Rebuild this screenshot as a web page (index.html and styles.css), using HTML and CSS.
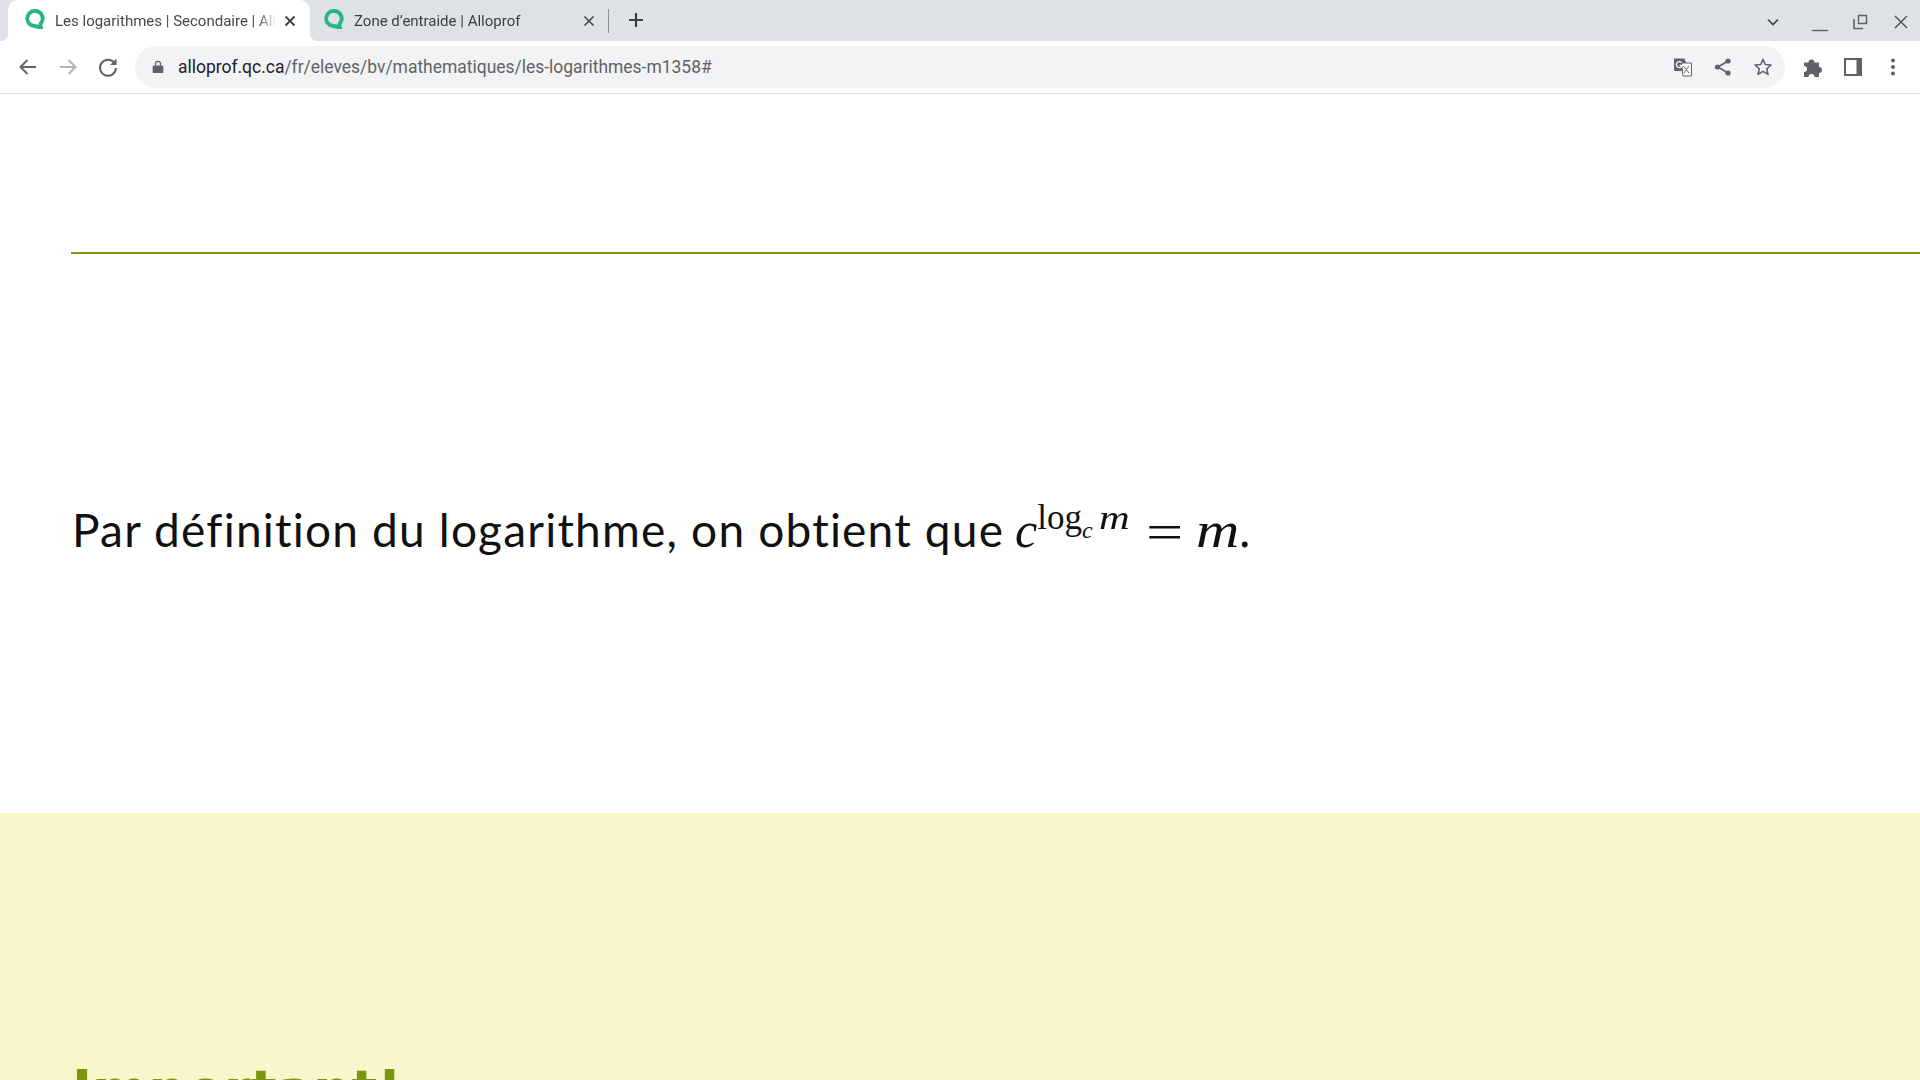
FILE: index.html
```html
<!DOCTYPE html>
<html lang="fr">
<head>
<meta charset="utf-8">
<title>Les logarithmes | Secondaire | Alloprof</title>
<link rel="stylesheet" href="styles.css">
</head>
<body>
<header class="chrome">
  <div class="tabstrip">
    <div class="tab tab-active">
      <svg class="favicon" viewBox="0 0 20 20"><path d="M10 2a7.500 7.500 0 0 0-.6 15c2.400.2 4.600.8 6.600 1.800-.5-1.500-.6-3-.3-4.300A7.500 7.500 0 0 0 10 2z" fill="none" stroke="#27b582" stroke-width="3.800"/></svg>
      <span class="tab-title">Les logarithmes | Secondaire | Alloprof</span>
      <svg class="tab-close" viewBox="0 0 12 12"><path d="M1.500 1.500l9 9M10.500 1.500l-9 9" stroke="#3c4043" stroke-width="1.800" fill="none"/></svg>
    </div>
    <div class="tab tab-idle">
      <svg class="favicon" viewBox="0 0 20 20"><path d="M10 2a7.500 7.500 0 0 0-.6 15c2.400.2 4.600.8 6.600 1.800-.5-1.500-.6-3-.3-4.300A7.500 7.500 0 0 0 10 2z" fill="none" stroke="#27b582" stroke-width="3.800"/></svg>
      <span class="tab-title">Zone d’entraide | Alloprof</span>
      <svg class="tab-close" viewBox="0 0 12 12"><path d="M1.500 1.500l9 9M10.500 1.500l-9 9" stroke="#45494d" stroke-width="1.600" fill="none"/></svg>
    </div>
    <span class="tab-sep"></span>
    <svg class="new-tab" viewBox="0 0 16 16"><path d="M8 1v14M1 8h14" stroke="#3c4043" stroke-width="2.200" fill="none"/></svg>
    <span class="strip-fill"></span>
    <svg class="win win-list" viewBox="0 0 14 14"><path d="M2 4.500l5 5 5-5" stroke="#3c4043" stroke-width="1.700" fill="none"/></svg>
    <svg class="win win-min" viewBox="0 0 16 16"><path d="M0 14.500h16" stroke="#5f6368" stroke-width="1.400" fill="none"/></svg>
    <svg class="win win-max" viewBox="0 0 16 16"><path d="M6.500 1.500h8v8h-8z" stroke="#5f6368" stroke-width="1.400" fill="none"/><path d="M2 5v9.500h9" stroke="#5f6368" stroke-width="1.600" fill="none"/></svg>
    <svg class="win win-close" viewBox="0 0 16 16"><path d="M2 2l12 12M14 2L2 14" stroke="#4a4d51" stroke-width="1.400" fill="none"/></svg>
  </div>
  <div class="toolbar">
    <svg class="tool" viewBox="0 0 24 24"><path d="M20 12H5M11.500 5l-7 7 7 7" stroke="#5f6368" stroke-width="2" fill="none"/></svg>
    <svg class="tool" viewBox="0 0 24 24"><path d="M4 12h15M12.500 5l7 7-7 7" stroke="#b1b4b8" stroke-width="2" fill="none"/></svg>
    <svg class="tool tool-reload" viewBox="0 0 24 24"><path d="M18.500 8A8 8 0 1 0 20 13" stroke="#5f6368" stroke-width="2" fill="none"/><path d="M20.500 3.500v6.500H14z" fill="#5f6368"/></svg>
    <div class="omnibox">
      <svg class="lock" viewBox="0 0 12 14"><path d="M1.500 5.500h9a.8.8 0 0 1 .8.800v6a.8.8 0 0 1-.8.800h-9a.8.8 0 0 1-.8-.8v-6a.8.8 0 0 1 .8-.8z" fill="#5f6368"/><path d="M3.500 5.500V3.800a2.500 2.500 0 0 1 5 0v1.700" stroke="#5f6368" stroke-width="1.300" fill="none"/></svg>
      <span class="url"><span class="url-host">alloprof.qc.ca</span>/fr/eleves/bv/mathematiques/les-logarithmes-m1358#</span>
      <svg class="omni-icon translate" viewBox="0 0 20 20"><path d="M1 1.500h10.500L13 6v8H2a1 1 0 0 1-1-1z" fill="#5f6368"/><path d="M8.500 6h10v13H10z" fill="#fff" stroke="#5f6368" stroke-width="1"/><path d="M10.500 9l5.500 7M16 9l-5 7" stroke="#5f6368" stroke-width="1" fill="none"/><path d="M8.500 5.500A3 3 0 1 0 9.200 8.500H6.500" stroke="#fff" stroke-width="1.300" fill="none"/></svg>
      <svg class="omni-icon" viewBox="0 0 20 20"><path d="M15 4L5 10l10 6" stroke="#5f6368" stroke-width="1.600" fill="none"/><circle cx="15" cy="4" r="2.600" fill="#5f6368"/><circle cx="4.500" cy="10" r="2.600" fill="#5f6368"/><circle cx="15" cy="16" r="2.600" fill="#5f6368"/></svg>
      <svg class="omni-icon" viewBox="0 0 20 20"><path d="M10 2.300l2.300 5.200 5.700.5-4.300 3.800 1.300 5.600-5-3-5 3 1.300-5.600L2 8l5.700-.5z" stroke="#5f6368" stroke-width="1.600" fill="none" stroke-linejoin="round"/></svg>
    </div>
    <svg class="ext" viewBox="0 0 20 20"><path d="M1 5.500h4.500a3 3 0 0 1 6 0H16v4.500a3 3 0 0 1 0 6V20h-4.500a3 3 0 0 0-6 0H1v-5a3 3 0 0 0 0-6z" fill="#5f6368"/></svg>
    <svg class="ext" viewBox="0 0 20 20"><path d="M1 1h18v18H1z" fill="#5f6368"/><path d="M3 3h10.500v14H3z" fill="#fff"/></svg>
    <svg class="menu" viewBox="0 0 6 20"><circle cx="3" cy="3.500" r="2" fill="#5f6368"/><circle cx="3" cy="10" r="2" fill="#5f6368"/><circle cx="3" cy="16.500" r="2" fill="#5f6368"/></svg>
  </div>
</header>
<main class="page">
  <section class="article">
    <hr class="rule">
    <p class="statement">Par définition du logarithme, on obtient que <span class="math"><i class="mi">c</i><span class="sup"><span class="op">log</span><i class="sub">c</i><i class="sup-m">m</i></span><span class="eq">=</span><i class="mi mi-wide">m</i><span class="dot">.</span></span></p>
  </section>
  <section class="notice">
    <h2 class="notice-title">Important!</h2>
  </section>
</main>
</body>
</html>
```
FILE: styles.css
```css
html, body { margin: 0; height: 100%; overflow: hidden; background: #fff; }
body { font-family: "Roboto", sans-serif; }
.chrome { display: flex; flex-direction: column; height: 94px; }
.tabstrip { display: flex; align-items: center; height: 41px; background: #dee1e6; padding: 0 0 0 8px; box-sizing: border-box; }
.tab { position: relative; display: flex; align-items: center; height: 41px; box-sizing: border-box; font-size: 15px; color: #3c4043; }
.tab-active { width: 302px; padding: 0 14px 0 17px; background: #fff; border-radius: 10px 10px 0 0; color: #45484c; }
.tab-active::before, .tab-active::after { content: ""; position: absolute; bottom: 0; width: 8px; height: 8px; }
.tab-active::before { left: -8px; background: radial-gradient(circle at 0 0, #dee1e6 8px, #fff 8.500px); }
.tab-active::after { right: -8px; background: radial-gradient(circle at 100% 0, #dee1e6 8px, #fff 8.500px); }
.tab-idle { width: 298px; padding: 0 13px 0 14px; }
.favicon { width: 20px; height: 20px; flex: none; margin-top: -3px; }
.tab-title { flex: 1; margin-left: 10px; white-space: nowrap; overflow: hidden; min-width: 0; -webkit-mask-image: linear-gradient(to right, #000 92%, transparent 100%); mask-image: linear-gradient(to right, #000 92%, transparent 100%); }
.tab-close { width: 12px; height: 12px; flex: none; margin-left: 8px; }
.tab-sep { width: 1px; height: 24px; background: #8e9195; }
.new-tab { width: 16px; height: 16px; margin-left: 19px; margin-top: -1px; }
.strip-fill { flex: 1; }
.win { flex: none; }
.win-list { width: 14px; height: 14px; margin-right: 32px; margin-top: 2px; }
.win-min { width: 16px; height: 16px; margin-right: 24px; margin-top: 6px; }
.win-max { width: 16px; height: 16px; margin-right: 25px; margin-top: 2px; }
.win-close { width: 16px; height: 16px; margin-right: 11px; margin-top: 2px; }
.toolbar { display: flex; align-items: center; height: 53px; box-sizing: border-box; background: #fff; border-bottom: 1px solid #dadce0; padding: 0 0 0 16px; }
.tool { width: 24px; height: 24px; flex: none; margin-right: 16px; }
.omnibox { flex: 1; display: flex; align-items: center; height: 42px; margin-left: -1px; margin-right: 18px; background: #f1f3f4; border-radius: 21px; padding: 0 12px 0 16px; min-width: 0; }
.lock { width: 12px; height: 14px; flex: none; margin-left: 1px; }
.url { flex: 1; margin-left: 14px; font-size: 17.470px; color: #5f6368; white-space: nowrap; }
.url-host { color: #202124; }
.omni-icon { width: 20px; height: 20px; flex: none; margin-left: 20px; }
.ext { width: 20px; height: 20px; flex: none; margin-right: 20px; }
.menu { width: 6px; height: 20px; flex: none; margin-right: 24px; margin-left: 7px; }
.page { display: flex; flex-direction: column; }
.article { height: 719px; box-sizing: border-box; padding: 158px 0 0 71px; }
.rule { margin: 0; border: 0; height: 2px; background: #7f9a12; }
.statement { margin: 246px 0 0 1px; font-family: "Lato", sans-serif; font-size: 46px; line-height: 60px; letter-spacing: 1.200px; font-variant-ligatures: none; color: #111; white-space: nowrap; }
.math { font-family: "Liberation Serif", serif; font-size: 50px; letter-spacing: 0; margin-left: -2px; }
.mi { font-style: italic; }
.sup { font-size: 35px; position: relative; top: -18px; }
.op { font-style: normal; }
.sub { font-size: 24px; position: relative; top: 9px; }
.sup-m { display: inline-block; font-size: 34px; margin-left: 6px; margin-right: 6px; transform: scaleX(1.250); transform-origin: left; }
.eq { display: inline-block; margin: 0 17px 0 17px; transform: translateY(2px) scaleX(1.320); transform-origin: left; }
.mi-wide { display: inline-block; margin-left: 5px; margin-right: 6px; transform: scaleX(1.200); transform-origin: left; }
.dot { font-style: normal; }
.notice { height: 400px; box-sizing: border-box; padding: 241px 0 0 72px; background: #f9f6cc; }
.notice-title { margin: 0; font-family: "DejaVu Sans", sans-serif; font-weight: 700; font-size: 54px; line-height: 72px; color: #7b950d; }
```
